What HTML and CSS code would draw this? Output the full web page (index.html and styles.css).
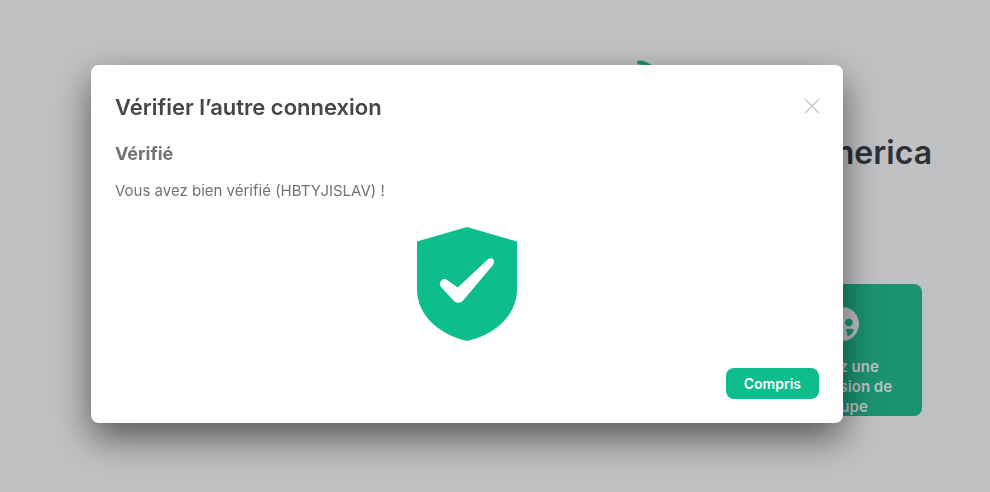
FILE: index.html
```html
<!DOCTYPE html>
<html lang="fr">
<head>
<meta charset="utf-8">
<meta name="viewport" content="width=device-width, initial-scale=1">
<title>Vérifier l’autre connexion</title>
<link rel="stylesheet" href="styles.css">
</head>
<body>
<main class="home">
  <svg class="home-logo" viewBox="0 0 48 48" aria-hidden="true">
    <path d="M3 2.500A17 17 0 0 1 20 19.500" fill="none" stroke="#209370" stroke-width="4" stroke-linecap="round"/>
  </svg>
  <h1 class="home-title">America</h1>
  <a class="home-card" href="#groupe">
    <svg class="card-icon" viewBox="0 0 34 34" aria-hidden="true">
      <circle cx="17" cy="17" r="17" fill="#c0c1c2"/>
      <g fill="#1b9371">
        <circle cx="10" cy="15.500" r="3.700"/>
        <circle cx="24" cy="15.500" r="3.700"/>
        <path d="M20.500 22.500Q24.500 20.800 29 22.500Q27.500 27.500 22.500 29.200Q22.500 25.500 20.500 22.500Z"/>
        <path d="M13.500 22.500Q9.500 20.800 5 22.500Q6.500 27.500 11.500 29.200Q11.500 25.500 13.500 22.500Z"/>
      </g>
    </svg>
    <span>Créez une discussion de groupe</span>
  </a>
</main>
<div class="overlay">
  <section class="dialog" role="dialog" aria-modal="true" aria-labelledby="dialog-title">
    <header class="dialog-header">
      <h2 class="dialog-title" id="dialog-title">Vérifier l’autre connexion</h2>
      <button class="close" type="button" aria-label="Fermer">
        <svg viewBox="0 0 14 14" aria-hidden="true"><path d="M0.500 0.500L13.500 13.500M13.500 0.500L0.500 13.500" fill="none" stroke="#c1c6cd" stroke-width="1.300" stroke-linecap="round"/></svg>
      </button>
    </header>
    <h3 class="status">Vérifié</h3>
    <p class="message">Vous avez bien vérifié (HBTYJISLAV) !</p>
    <svg class="shield" viewBox="0 0 100 114" aria-hidden="true">
      <path d="M50 0L100 14.500V62C100 87 80 107 50 114C20 107 0 87 0 62V14.500Z" fill="#0dbd8b"/>
      <path d="M24.300 53.500C26.500 51.500 28.500 51.800 30.500 53.200L40.700 60.500L70.500 32.800C75 29 79 33.500 76 38L46.500 73C43.500 76.500 39 76.500 36 73L24 60C22.200 57.800 22.400 55.300 24.300 53.500Z" fill="#fff"/>
    </svg>
    <footer class="dialog-footer">
      <button class="primary" type="button">Compris</button>
    </footer>
  </section>
</div>
</body>
</html>
```
FILE: styles.css
```css
* {
  box-sizing: border-box;
}

body {
  margin: 0;
  min-height: 100vh;
  background: #c0c1c3;
  font-family: Inter, "Liberation Sans", sans-serif;
  overflow: hidden;
}

h1,
h2,
h3,
p {
  margin: 0;
}

.home {
  display: flex;
  flex-direction: column;
  align-items: flex-end;
  padding: 60px 68px 0 0;
}

.home-logo {
  width: 48px;
  height: 48px;
  margin-right: 238px;
}

.home-title {
  margin: 20px -10px 0 0;
  color: #2e3135;
  font-size: 32px;
  font-weight: 600;
  line-height: 50px;
}

.home-card {
  display: flex;
  flex-direction: column;
  align-items: center;
  gap: 16px;
  width: 160px;
  height: 132px;
  margin-top: 106px;
  padding: 23px 20px 0;
  border-radius: 8px;
  background: #1b9371;
  color: #c0c1c2;
  font-size: 15px;
  font-weight: 600;
  line-height: 20px;
  text-align: center;
  text-decoration: none;
}

.card-icon {
  flex: none;
  width: 34px;
  height: 34px;
}

.overlay {
  position: fixed;
  inset: 0;
  display: flex;
  align-items: center;
  padding: 0 147px 4px 91px;
}

.dialog {
  flex: 1;
  padding: 24px;
  border-radius: 8px;
  background: #fff;
  box-shadow: 0 15px 36px 0 rgba(0, 0, 0, 0.54);
  color: #737373;
}

.dialog-header {
  display: flex;
  align-items: center;
  justify-content: space-between;
}

.dialog-title {
  color: #45474a;
  font-size: 22px;
  font-weight: 600;
  line-height: 36px;
}

.close {
  display: flex;
  padding: 0 0 2px;
  border: 0;
  background: none;
}

.close svg {
  width: 14px;
  height: 14px;
  overflow: visible;
}

.status {
  margin-top: 16px;
  font-size: 18px;
  font-weight: 700;
  line-height: 26px;
}

.message {
  margin-top: 14px;
  font-size: 15px;
  line-height: 20px;
}

.shield {
  display: block;
  width: 100px;
  height: 114px;
  margin: 26px auto 0;
}

.dialog-footer {
  display: flex;
  justify-content: flex-end;
  margin-top: 27px;
}

.primary {
  padding: 0 18px;
  border: 0;
  border-radius: 8px;
  background: #0dbd8b;
  color: #fff;
  font: 600 14px/31px Inter, "Liberation Sans", sans-serif;
}
```
